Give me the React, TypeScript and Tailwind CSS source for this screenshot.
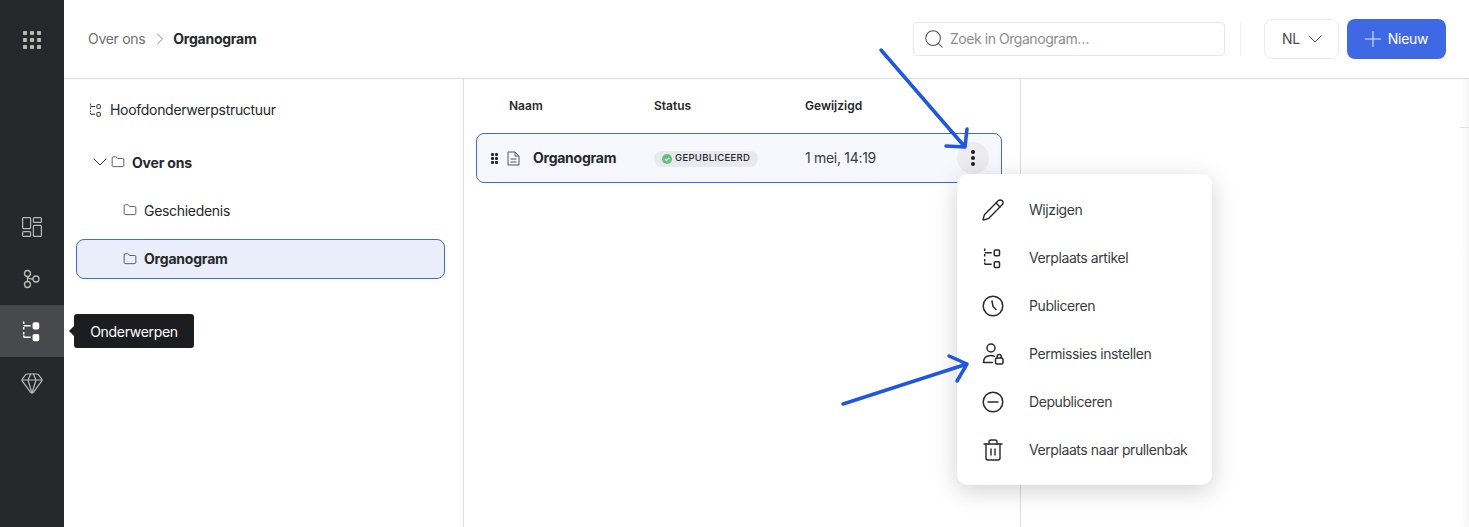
import React from 'react';
import { ChevronDown, ChevronRight, Folder, Gem, Pencil, Plus, Search, Trash2 } from 'lucide-react';

const TreeIcon: React.FC<{ className?: string; filled?: boolean }> = ({ className, filled }) => (
    <svg viewBox="0 0 24 24" fill="none" stroke="currentColor" strokeWidth="1.5" className={className}>
        <path d="M3.700 2.500v2.500M3.700 8v2.500M3.700 13v2.500" />
        <path d="M3.700 6.700h7M3.700 18.300h7" />
        <path d="M3.700 16.500v1.800" />
        <rect x="13.300" y="4" width="5.200" height="5.700" rx="1" fill={filled ? 'currentColor' : 'none'} />
        <rect x="13.300" y="15.700" width="5.200" height="5.700" rx="1" fill={filled ? 'currentColor' : 'none'} />
    </svg>
);

const UserLockIcon: React.FC<{ className?: string }> = ({ className }) => (
    <svg viewBox="0 0 24 24" fill="none" stroke="currentColor" strokeWidth="1.5" strokeLinecap="round" className={className}>
        <circle cx="10" cy="6" r="4" />
        <path d="M2.500 20.500c0-4.500 3-7 7.500-7 1.500 0 2.500.3 3.500.8M2.500 20.500h9" />
        <rect x="14.500" y="16" width="7.500" height="6" rx="1.500" />
        <path d="M16.200 16v-1.500a2 2 0 0 1 4 0V16" />
    </svg>
);

const ClockIcon: React.FC<{ className?: string }> = ({ className }) => (
    <svg viewBox="0 0 24 24" fill="none" stroke="currentColor" strokeWidth="1.5" strokeLinecap="round" className={className}>
        <circle cx="12" cy="12" r="9.800" />
        <path d="M11 7l1 5.500 3 3" />
    </svg>
);

const MinusCircleIcon: React.FC<{ className?: string }> = ({ className }) => (
    <svg viewBox="0 0 24 24" fill="none" stroke="currentColor" strokeWidth="1.5" strokeLinecap="round" className={className}>
        <circle cx="12" cy="12" r="9.800" />
        <path d="M7 12h10" />
    </svg>
);

const BoardIcon: React.FC = () => (
    <svg viewBox="0 0 20 20" fill="none" stroke="currentColor" strokeWidth="1.200" className="w-[20px] h-[20px]">
        <rect x="0.600" y="0.600" width="8" height="11" rx="1" />
        <rect x="0.600" y="14.600" width="8" height="4.800" rx="1" />
        <rect x="11.400" y="0.600" width="8" height="4.800" rx="1" />
        <rect x="11.400" y="8.400" width="8" height="11" rx="1" />
    </svg>
);

const BranchIcon: React.FC = () => (
    <svg viewBox="0 0 24 24" fill="none" stroke="currentColor" strokeWidth="1.300" className="w-[24px] h-[24px]">
        <circle cx="7.500" cy="6.500" r="3" />
        <circle cx="16" cy="12" r="3" />
        <circle cx="7.500" cy="17.500" r="3" />
        <path d="M7.500 9.500v5M7.500 10c.5 1.500 2.500 2 5.500 2" />
    </svg>
);

const GridIcon: React.FC = () => (
    <div className="grid grid-cols-3 gap-[3px]">
        {Array.from({ length: 9 }).map((_, i) => (
            <span key={i} className="w-[4px] h-[4px] bg-[#b9babc] rounded-[1px]" />
        ))}
    </div>
);

const menuItems = [
    { label: 'Wijzigen', icon: <Pencil className="w-[24px] h-[24px]" strokeWidth={1.4} /> },
    { label: 'Verplaats artikel', icon: <TreeIcon className="w-[24px] h-[24px]" /> },
    { label: 'Publiceren', icon: <ClockIcon className="w-[24px] h-[24px]" /> },
    { label: 'Permissies instellen', icon: <UserLockIcon className="w-[24px] h-[24px]" /> },
    { label: 'Depubliceren', icon: <MinusCircleIcon className="w-[24px] h-[24px]" /> },
    { label: 'Verplaats naar prullenbak', icon: <Trash2 className="w-[24px] h-[24px]" strokeWidth={1.4} /> },
];

const App: React.FC = () => {
    return (
        <div className="relative flex h-[527px] w-[1469px] overflow-hidden bg-white text-[#26282c] font-['Inter',sans-serif] text-[14px] tracking-[-0.3px]">
            {/* sidebar */}
            <aside className="w-[64px] shrink-0 bg-[#26282c] text-[#b9babc] flex flex-col">
                <div className="h-[80px] flex items-center justify-center"><GridIcon /></div>
                <div className="mt-[121px] flex flex-col">
                    <div className="h-[52px] flex items-center justify-center"><BoardIcon /></div>
                    <div className="h-[52px] flex items-center justify-center"><BranchIcon /></div>
                    <div className="h-[52px] flex items-center justify-center bg-[#47494c] text-white"><TreeIcon className="w-[24px] h-[24px]" filled /></div>
                    <div className="h-[52px] flex items-center justify-center"><Gem className="w-[24px] h-[24px]" strokeWidth={1.2} /></div>
                </div>
            </aside>

            <div className="flex-1 flex flex-col min-w-0">
                {/* header */}
                <header className="h-[79px] shrink-0 border-b border-[#dcdcdc] flex items-center pl-[24px] pr-[23px]">
                    <span className="text-[#6e7073] pb-[2px]">Over ons</span>
                    <ChevronRight className="w-[20px] h-[20px] ml-[5px] mr-[3px] text-[#6e7073]" strokeWidth={1} />
                    <span className="font-bold pb-[2px] tracking-[-0.25px]">Organogram</span>
                    <div className="ml-auto flex items-center">
                        <div className="w-[312px] h-[34px] border border-[#e8e8e8] rounded-[4px] flex items-center pl-[9px] gap-[5px] text-[#8b8c8f]">
                            <Search className="w-[22px] h-[22px] text-[#4a4c50]" strokeWidth={1.1} />
                            <span className="pb-[2px] tracking-[-0.45px]">Zoek in Organogram…</span>
                        </div>
                        <div className="w-px h-[34px] bg-[#f0f0f0] mx-[15px]" />
                        <div className="w-[75px] h-[40px] border border-[#ececec] rounded-[8px] flex items-center justify-center gap-[3px] text-[#4a4c50] mx-[8px] pl-[6px]">
                            <span className="pb-[2px]">NL</span>
                            <ChevronDown className="w-[24px] h-[24px]" strokeWidth={1} />
                        </div>
                        <button className="w-[99px] h-[40px] bg-[#3f68e4] rounded-[8px] text-white flex items-center justify-center gap-[2px] pr-[5px]">
                            <Plus className="w-[26px] h-[26px] text-[#dfe6fa]" strokeWidth={1} />
                            <span className="pb-[2px]">Nieuw</span>
                        </button>
                    </div>
                </header>

                <div className="flex-1 flex min-h-0">
                    {/* tree */}
                    <nav className="w-[400px] shrink-0 border-r border-[#dcdcdc] pt-[7px] pl-[12px] pr-[18px]">
                        <div className="h-[48px] flex items-center gap-[6px] pl-[12px]">
                            <TreeIcon className="w-[16px] h-[16px]" />
                            <span className="pb-[2px]">Hoofdonderwerpstructuur</span>
                        </div>
                        <div className="h-[56px] flex items-center pl-[12px]">
                            <ChevronDown className="w-[24px] h-[24px]" strokeWidth={1} />
                            <Folder className="w-[14px] h-[14px] -ml-[1px] mr-[7px]" strokeWidth={1.25} />
                            <span className="font-bold tracking-[-0.2px]">Over ons</span>
                        </div>
                        <div className="h-[40px] flex items-center gap-[7px] pl-[47px]">
                            <Folder className="w-[14px] h-[14px]" strokeWidth={1.25} />
                            <span>Geschiedenis</span>
                        </div>
                        <div className="mt-[9px] h-[40px] flex items-center gap-[7px] pl-[46px] bg-[#e9eefa] border border-[#3f68e4] rounded-[8px]">
                            <Folder className="w-[14px] h-[14px]" strokeWidth={1.25} />
                            <span className="font-bold pb-[2px] tracking-[-0.2px]">Organogram</span>
                        </div>
                    </nav>

                    {/* table */}
                    <main className="w-[557px] shrink-0 border-r border-[#dcdcdc] px-[12px]">
                        <div className="h-[54px] flex items-center font-semibold text-[12px] tracking-normal">
                            <span className="w-[178px] pl-[33px]">Naam</span>
                            <span className="w-[151px]">Status</span>
                            <span>Gewijzigd</span>
                        </div>
                        <div className="h-[50px] w-[526px] border border-[#3f68e4] rounded-[8px] bg-[#f6f8fe] flex items-center">
                            <div className="w-[177px] flex items-center pl-[14px] shrink-0">
                                <div className="grid grid-cols-2 gap-[1px] mr-[9px]">
                                    {Array.from({ length: 6 }).map((_, i) => <span key={i} className="w-[3px] h-[3px] bg-[#26282c] rounded-[1px]" />)}
                                </div>
                                <svg viewBox="0 0 13 15" fill="none" stroke="#55575b" strokeWidth="1" className="w-[13px] h-[15px] mr-[13px]">
                                    <path d="M1 1h7l4 4v9H1zM8 1v4h4M3.500 8h6M3.500 11h6" />
                                </svg>
                                <span className="font-bold pb-[2px] tracking-[-0.25px]">Organogram</span>
                            </div>
                            <div className="w-[151px] shrink-0">
                                <span className="inline-flex items-center h-[16px] w-[104px] rounded-full bg-[#e8e9ed] pl-[8px] gap-[3px] text-[9.5px] font-medium tracking-[0.3px]">
                                    <span className="w-[10px] h-[10px] shrink-0 rounded-full bg-[#5fc27e] flex items-center justify-center">
                                        <svg viewBox="0 0 10 10" className="w-[10px] h-[10px]" fill="none" stroke="white" strokeWidth="1.2"><path d="M3 5.200l1.500 1.500L7.200 3.800" /></svg>
                                    </span>
                                    GEPUBLICEERD
                                </span>
                            </div>
                            <span className="text-[#3a3c40] pb-[2px]">1 mei, 14:19</span>
                            <div className="ml-auto mr-[12px] w-[32px] h-[32px] rounded-full bg-[#ececef] flex flex-col items-center justify-center gap-[2px]">
                                <span className="w-[4px] h-[4px] rounded-full bg-[#1c1d20]" />
                                <span className="w-[4px] h-[4px] rounded-full bg-[#1c1d20]" />
                                <span className="w-[4px] h-[4px] rounded-full bg-[#1c1d20]" />
                            </div>
                        </div>
                    </main>

                    {/* edge of the next panel */}
                    <div className="ml-auto w-[9px] bg-gradient-to-r from-white to-[#f6f6f6] pt-[48px]">
                        <div className="h-px bg-[#e4e4e4]" />
                    </div>
                </div>
            </div>

            {/* tooltip */}
            <div className="absolute left-[74px] top-[314px] h-[34px] w-[120px] bg-[#1c1d20] text-white rounded-[3px] flex items-center justify-center">
                <span className="absolute left-[-5px] top-[12px] w-0 h-0 border-y-[5px] border-y-transparent border-r-[5px] border-r-[#1c1d20]" />
                Onderwerpen
            </div>

            {/* context menu */}
            <div className="absolute left-[957px] top-[174px] w-[255px] h-[311px] bg-white rounded-[10px] shadow-[0_6px_24px_rgba(0,0,0,0.18)] pt-[12px] tracking-[-0.42px]">
                {menuItems.map(item => (
                    <div key={item.label} className="h-[48px] flex items-center pl-[24px] gap-[24px] text-[#3a3c40]">
                        <span className="w-[24px] flex justify-center text-[#26282c]">{item.icon}</span>
                        <span className="pb-[2px]">{item.label}</span>
                    </div>
                ))}
            </div>

            {/* annotation arrows */}
            <svg className="absolute inset-0 pointer-events-none" width="1469" height="527" fill="none" stroke="#1f57e0" strokeWidth="3.500" strokeLinecap="round" strokeLinejoin="round">
                <path d="M881 50L965 147M967 129L965 147L946 146" />
                <path d="M843 404L967 364M949 356L967 364L957 381" />
            </svg>
        </div>
    );
};

export default App;
